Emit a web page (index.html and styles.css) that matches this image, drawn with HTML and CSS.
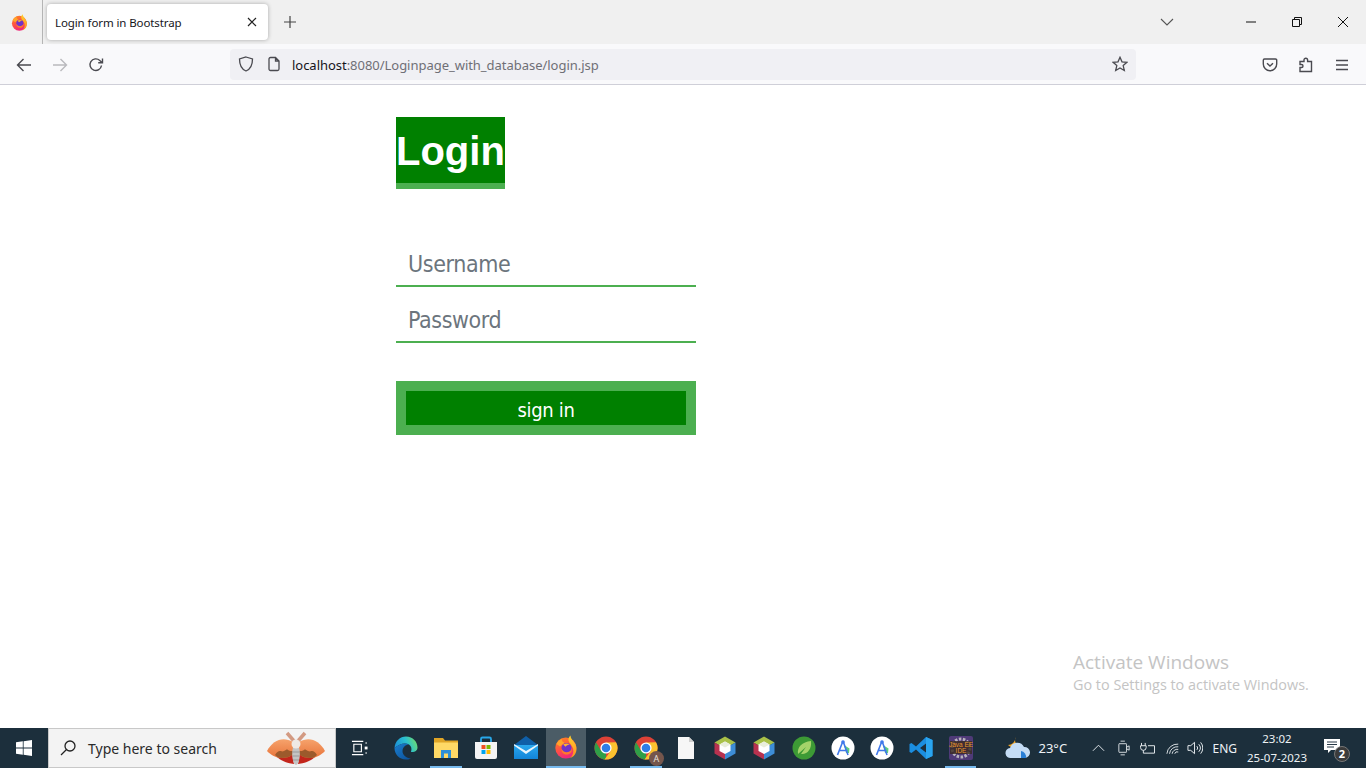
FILE: index.html
```html
<!DOCTYPE html>
<html lang="en">
<head>
  <meta charset="UTF-8" />
  <title>Login form in Bootstrap</title>
  <link rel="stylesheet" href="styles.css">
</head>
<body>
  <svg class="sprite" width="0" height="0">
    <defs>
      <linearGradient id="ffBody" x1="0" y1="0" x2="0.4" y2="1">
        <stop offset="0" stop-color="#ff8a1f"/>
        <stop offset="0.6" stop-color="#ff4f45"/>
        <stop offset="1" stop-color="#f0287a"/>
      </linearGradient>
      <linearGradient id="ffFlame" x1="0" y1="0" x2="0" y2="1">
        <stop offset="0" stop-color="#ffd02e"/>
        <stop offset="1" stop-color="#ff8a1f"/>
      </linearGradient>
      <linearGradient id="edgeTop" x1="0" y1="0.6" x2="1" y2="0.3">
        <stop offset="0" stop-color="#1b8fd8"/>
        <stop offset="0.55" stop-color="#2bc0d0"/>
        <stop offset="1" stop-color="#6fdc6a"/>
      </linearGradient>
      <linearGradient id="edgeLow" x1="0" y1="0" x2="1" y2="1">
        <stop offset="0" stop-color="#1a7fd0"/>
        <stop offset="1" stop-color="#0c4f96"/>
      </linearGradient>
      <linearGradient id="mailBody" x1="0" y1="0" x2="0" y2="1">
        <stop offset="0" stop-color="#2aa8ee"/>
        <stop offset="1" stop-color="#1284d8"/>
      </linearGradient>
      <linearGradient id="mothWing" x1="0" y1="0" x2="0" y2="1">
        <stop offset="0" stop-color="#f6a36c"/>
        <stop offset="1" stop-color="#e8743a"/>
      </linearGradient>
      <symbol id="firefox" viewBox="0 0 24 24">
        <circle cx="11.800" cy="13" r="10.500" fill="url(#ffBody)"/>
        <path d="M16.500 .5c0 2.500 1.500 4 3.500 6.500 2.500 3 3 6.500 2.200 9.500-1 3.500-3.500 6-6.200 6.500 3-2.500 4-6.500 3-9.500-1-3.500-4-5-4.500-8-.3-2 .6-4 2-5z" fill="url(#ffFlame)"/>
        <path d="M2.500 9c1-2.500 3-4.500 5.500-5-.5 1.500.5 3 2.500 3.800L6 11.500z" fill="#ffa42b"/>
        <circle cx="12.500" cy="13" r="5" fill="#7033c8"/>
        <path d="M7.500 13.500c1 3 4.500 4.500 7.500 3.200 1.800-.8 2.700-2.200 2.600-4 1.200 3.300-1 6.800-5.100 6.800-3.200 0-5.500-2.600-5-6z" fill="#ff7a2a"/>
        <path d="M9.200 9.500c2-1.500 4.700-1.500 6.600 0-2 .3-3.500 1-4.300 2.300z" fill="#ffb02e"/>
      </symbol>
      <symbol id="chrome" viewBox="0 0 24 24">
        <circle cx="12" cy="12" r="11.500" fill="#dd4237"/>
        <path d="M2 6.300 7 14.800 12 7 12 23.500A11.500 11.500 0 0 1 2 6.300z" fill="#2f9e48"/>
        <path d="M22 6.300A11.500 11.500 0 0 1 10.500 23.400L16.800 14.700 12 6.500z" fill="#fbc22f"/>
        <circle cx="12" cy="12" r="5.600" fill="#fff"/>
        <circle cx="12" cy="12" r="4.300" fill="#2f7ee8"/>
      </symbol>
      <symbol id="netbeans" viewBox="0 0 24 24">
        <path d="M12 .5 22.500 6.500 12 12.500 1.500 6.500z" fill="#a9c148"/>
        <path d="M1.500 6.500 12 12.500V23.500L1.500 17.500z" fill="#b8324f"/>
        <path d="M22.500 6.500V17.500L12 23.500V12.500z" fill="#3d8dd6"/>
        <path d="M12 5.500 17.500 8.500V15L12 18 6.500 15V8.500z" fill="#fff"/>
        <path d="M12 5.500 17.500 8.500 12 11.500 6.500 8.500z" fill="#e9eedc"/>
      </symbol>
      <symbol id="studio" viewBox="0 0 24 24">
        <circle cx="12" cy="12" r="11.500" fill="#fff"/>
        <path d="M13 9 18.500 12.500 18 17 15 17z" fill="#5ed07e"/>
        <path d="M12 5 6.500 19M12 5 17 19M7.500 14.500H16.500" fill="none" stroke="#3f78ea" stroke-width="1.600"/>
        <circle cx="12" cy="6" r="1.800" fill="#3f78ea"/>
      </symbol>
    </defs>
  </svg>

  <header class="chrome">
    <div class="tabbar">
      <div class="app-menu">
        <svg class="fav" viewBox="0 0 24 24"><use href="#firefox"/></svg>
      </div>
      <div class="tab">
        <span class="tab-title">Login form in Bootstrap</span>
        <svg class="tab-close" viewBox="0 0 12 12"><path d="M2 2 10 10M10 2 2 10"/></svg>
      </div>
      <svg class="new-tab" viewBox="0 0 14 14"><path d="M7 1V13M1 7H13"/></svg>
      <svg class="tab-list" viewBox="0 0 14 8"><path d="M1 1 7 7 13 1"/></svg>
      <div class="win-btns">
        <svg viewBox="0 0 12 12"><path d="M1 6H11"/></svg>
        <svg viewBox="0 0 12 12"><path d="M1.500 3.500H8.500V10.500H1.500zM3.500 3.500V1.500H10.500V8.500H8.500"/></svg>
        <svg viewBox="0 0 12 12"><path d="M1 1 11 11M11 1 1 11"/></svg>
      </div>
    </div>
    <div class="toolbar">
      <div class="nav-btns">
        <svg viewBox="0 0 16 16"><path d="M15 8H1.500M7.500 2 1.500 8 7.500 14"/></svg>
        <svg class="off" viewBox="0 0 16 16"><path d="M1 8H14.500M8.500 2 14.500 8 8.500 14"/></svg>
        <svg viewBox="0 0 16 16"><path d="M13.500 8.500A5.800 5.800 0 1 1 11.800 3.500L14 5.500M14.500 1.500V5.800H10.200"/></svg>
      </div>
      <div class="urlbar">
        <svg class="url-icon" viewBox="0 0 16 16"><path d="M8 1 14.500 3C14.500 9 13 13 8 15 3 13 1.500 9 1.500 3z"/></svg>
        <svg class="url-icon doc" viewBox="0 0 16 16"><path d="M3 3A1.500 1.500 0 0 1 4.500 1.500H9.500L13 5V13A1.500 1.500 0 0 1 11.500 14.500H4.500A1.500 1.500 0 0 1 3 13zM9.500 1.500V5H13"/></svg>
        <span class="url-text">localhost<span class="url-rest">:8080/Loginpage_with_database/login.jsp</span></span>
        <svg class="url-icon star" viewBox="0 0 16 16"><path d="M8 1.300 10 5.800 14.900 6.300 11.200 9.600 12.300 14.500 8 12 3.700 14.500 4.800 9.600 1.100 6.300 6 5.800z"/></svg>
      </div>
      <div class="tool-btns">
        <svg viewBox="0 0 16 16"><path d="M2.500 2H13.500A1.200 1.200 0 0 1 14.700 3.200V7A6.700 6.700 0 0 1 1.300 7V3.200A1.200 1.200 0 0 1 2.500 2zM5 6.200 8 9 11 6.200"/></svg>
        <svg viewBox="0 0 16 16"><path d="M2 14.500V10.500H3.500A1.500 1.500 0 0 0 3.500 7.500H2V4.500H6V3A1.800 1.800 0 0 1 9.600 3V4.500H13.500V14.500z"/></svg>
        <svg viewBox="0 0 16 16"><path d="M2 3.500H14M2 8H14M2 12.500H14"/></svg>
      </div>
    </div>
  </header>

  <main class="page">
    <div class="login">
      <h1 class="login-title">Login</h1>
      <form class="login-form">
        <input class="field" type="text" placeholder="Username" />
        <input class="field" type="password" placeholder="Password" />
        <input class="submit" type="submit" value="sign in" />
      </form>
    </div>
    <div class="activate">
      <div class="activate-head">Activate Windows</div>
      <div class="activate-sub">Go to Settings to activate Windows.</div>
    </div>
  </main>

  <footer class="taskbar">
    <div class="start">
      <svg viewBox="0 0 16 16"><path d="M0 2.300 6.800 1.300V7.600H0zM7.600 1.200 16 0V7.600H7.600zM0 8.400H6.800V14.700L0 13.700zM7.600 8.400H16V16L7.600 14.800z"/></svg>
    </div>
    <div class="search">
      <svg class="search-icon" viewBox="0 0 16 16"><circle cx="10" cy="6" r="5"/><path d="M6.500 9.500 1 15"/></svg>
      <span class="search-text">Type here to search</span>
      <svg class="moth" viewBox="0 0 58 36">
        <path d="M27 11 20 3M31 11 38 3" stroke="#d39a82" stroke-width="3.500" fill="none"/>
        <path d="M25 20C18 21 12 24 10 27c3 3 9 6 17 7z" fill="#c3261c"/>
        <path d="M33 20C40 21 46 24 48 27c-3 3-9 6-17 7z" fill="#c3261c"/>
        <path d="M26 12C16 6 6 10 0 21c4 4 9 7 14 7 5 0 9-1 12-4z" fill="url(#mothWing)"/>
        <path d="M32 12C42 6 52 10 58 21c-4 4-9 7-14 7-5 0-9-1-12-4z" fill="url(#mothWing)"/>
        <path d="M8 25c2-3 3-4 5-4s2 1 4 0 3-2 4-1 3 1 5 1v3c-3 3-7 4-12 4-2 0-4-1-6-3zM50 25c-2-3-3-4-5-4s-2 1-4 0-3-2-4-1-3 1-5 1v3c3 3 7 4 12 4 2 0 4-1 6-3z" fill="#9c5a2c"/>
        <ellipse cx="29" cy="24" rx="3.800" ry="11" fill="#c4c4c4"/>
        <path d="M25.500 22H32.500M25.500 26H32.500M26 30H32" stroke="#9a9a9a" stroke-width="1"/>
        <circle cx="29" cy="14" r="4.500" fill="#efe9e4"/>
      </svg>
    </div>
    <div class="taskview">
      <svg viewBox="0 0 18 16"><path d="M1 1H13M1 15H13M3 4H11V12H3zM16 2V3.500M16 12.500V14"/><rect class="dot" x="14.500" y="6.500" width="3" height="3"/></svg>
    </div>
    <div class="apps">
      <div class="app">
        <svg viewBox="0 0 24 24">
          <path d="M.5 12C1 5 6 .5 12 .5c7 0 11.500 5.500 11.500 11 0 3.500-3.500 5-6.500 4.500 1-3 .5-6-2-7.500-4-2.500-10-.5-14.500 3.500z" fill="url(#edgeTop)"/>
          <path d="M.5 12c4.500-4 10.500-6 14.500-3.500-3 0-6.500 2.500-6.500 6.500s3.500 7 8.500 7.500c-2 1-3.500 1-5 1C5 23.500.5 18 .5 12z" fill="url(#edgeLow)"/>
        </svg>
      </div>
      <div class="app running">
        <svg viewBox="0 0 24 24">
          <path d="M0 2H9L11 4.500H24V22H0z" fill="#e0a526"/>
          <path d="M0 6.500H24V22H0z" fill="#ffd966"/>
          <path d="M7 22V14H17V22H14V17.500H10V22z" fill="#2d8fd8"/>
        </svg>
      </div>
      <div class="app">
        <svg viewBox="0 0 24 24">
          <path d="M7 6V3A1.500 1.500 0 0 1 8.500 1.500H15.500A1.500 1.500 0 0 1 17 3V6" fill="none" stroke="#28a8ea" stroke-width="1.800"/>
          <path d="M1 6H23V21A2 2 0 0 1 21 23H3A2 2 0 0 1 1 21z" fill="#f4f4f4"/>
          <rect x="7.500" y="9" width="4" height="4" fill="#f25022"/>
          <rect x="12.500" y="9" width="4" height="4" fill="#7fba00"/>
          <rect x="7.500" y="14" width="4" height="4" fill="#00a4ef"/>
          <rect x="12.500" y="14" width="4" height="4" fill="#ffb900"/>
        </svg>
      </div>
      <div class="app">
        <svg viewBox="0 0 24 24">
          <path d="M0 9 12 0 24 9z" fill="#0f5fa8"/>
          <path d="M0 9H24V23H0z" fill="url(#mailBody)"/>
          <path d="M0 8 12 15 24 8 24 9.500 12 18 0 9.500z" fill="#e8f4fc"/>
        </svg>
      </div>
      <div class="app active">
        <svg viewBox="0 0 24 24"><use href="#firefox"/></svg>
      </div>
      <div class="app">
        <svg viewBox="0 0 24 24"><use href="#chrome"/></svg>
      </div>
      <div class="app running">
        <svg viewBox="0 0 24 24"><use href="#chrome"/></svg>
        <span class="profile">A</span>
      </div>
      <div class="app tight">
        <svg viewBox="0 0 24 24"><path d="M4 1H15L20 6V23H4z" fill="#f6f6f6"/><path d="M15 1 20 6H15z" fill="#cfcfcf"/></svg>
      </div>
      <div class="app tight">
        <svg viewBox="0 0 24 24"><use href="#netbeans"/></svg>
      </div>
      <div class="app tight">
        <svg viewBox="0 0 24 24"><use href="#netbeans"/></svg>
      </div>
      <div class="app tight">
        <svg viewBox="0 0 24 24">
          <circle cx="12" cy="12" r="11.500" fill="#3d9a35"/>
          <path d="M6 18C5 11 10 6 19 5 20 13 15 19 9 18L14 11z" fill="#a5d36a"/>
        </svg>
      </div>
      <div class="app tight">
        <svg viewBox="0 0 24 24"><use href="#studio"/></svg>
      </div>
      <div class="app tight">
        <svg viewBox="0 0 24 24"><use href="#studio"/></svg>
      </div>
      <div class="app tight">
        <svg viewBox="0 0 24 24">
          <path d="M17 1 23.500 4V20L17 23 7 13.500 2.500 17 .5 16V8L2.500 7 7 10.500zM17 7.500 11 12 17 16.500z" fill="#1b8ee0"/>
          <path d="M17 1 23.500 4V20L17 23z" fill="#2aa5f0"/>
        </svg>
      </div>
      <div class="app tight running">
        <svg viewBox="0 0 24 24">
          <rect width="24" height="24" rx="2" fill="#4f3a78"/>
          <circle cx="12" cy="12" r="9" fill="none" stroke="#b9b4bd" stroke-width="3" stroke-dasharray="2.500 1.500"/>
          <rect x="1" y="5" width="22" height="13" fill="#3a2a20" opacity="0.8"/>
          <text class="jee" x="12" y="10.500">Java EE</text>
          <text class="jee" x="12" y="17">IDE</text>
        </svg>
      </div>
    </div>
    <div class="tray">
      <svg class="weather" viewBox="0 0 26 24">
        <path d="M11 1C9 5 10 9 16 9 14 13 7 13 3 9 7 9 10 6 11 1z" fill="#f5a623"/>
        <path d="M6 22A5 5 0 0 1 5 12 7.500 7.500 0 0 1 19 11 5.500 5.500 0 0 1 20 22z" fill="#c4dcf5"/>
        <path d="M16 22V15A6 6 0 0 1 21 22z" fill="#2a7fd6"/>
      </svg>
      <span class="temp">23°C</span>
      <svg class="tray-icon caret" viewBox="0 0 14 8"><path d="M1 7 7 1 13 7"/></svg>
      <svg class="tray-icon cam" viewBox="0 0 14 18"><path d="M3 1H8M3 17H8M1 4.500V13.500M10 4.500V13.500M1 4H10M1 14H10M10 8 13 6.500V11.500L10 10"/></svg>
      <svg class="tray-icon plug" viewBox="0 0 16 14"><path d="M1 1V4M5 1V4M0 4H6V6A3 3 0 0 1 0 6zM3 9V12H15V4H8"/></svg>
      <svg class="tray-icon wifi" viewBox="0 0 16 14"><path d="M1 13A12 12 0 0 1 14 2M4 13A9 9 0 0 1 14 5M7 13A6 6 0 0 1 14 8M10 13A3 3 0 0 1 14 11"/></svg>
      <svg class="tray-icon speaker" viewBox="0 0 17 14"><path d="M1 4.500H4L8 1V13L4 9.500H1zM10.500 5A3 3 0 0 1 10.500 9M12.500 3A6 6 0 0 1 12.500 11M14.500 1A9 9 0 0 1 14.500 13"/></svg>
      <span class="lang">ENG</span>
      <div class="clock">
        <span>23:02</span>
        <span>25-07-2023</span>
      </div>
      <div class="notify">
        <svg viewBox="0 0 16 14"><path d="M0 0H16V11H7L4 14V11H0z" fill="#fff"/><path d="M3 3H13M3 5.500H13M3 8H10" stroke="#2a3b48" stroke-width="1"/></svg>
        <span class="notify-count">2</span>
      </div>
    </div>
  </footer>
</body>
</html>
```

FILE: styles.css
```css
* {
  box-sizing: border-box;
}

html,
body {
  height: 100%;
}

body {
  margin: 0;
  display: flex;
  flex-direction: column;
  height: 768px;
  overflow: hidden;
  font-family: "Noto Sans", sans-serif;
  background: white;
}

.sprite {
  position: absolute;
}

/* browser chrome */
.chrome {
  flex: none;
}

.tabbar {
  display: flex;
  align-items: center;
  height: 44px;
  background: #f0f0f0;
}

.app-menu {
  display: flex;
  align-items: center;
  justify-content: center;
  width: 43px;
  height: 44px;
  border-right: 1px solid #b5b5b5;
}

.fav {
  width: 17px;
  height: 17px;
  margin-right: 4px;
}

.tab {
  display: flex;
  align-items: center;
  justify-content: space-between;
  width: 221px;
  height: 36px;
  margin-left: 4px;
  padding: 0 10px 0 8px;
  background: white;
  border-radius: 4px;
  box-shadow: 0 0 4px rgba(0, 0, 0, 0.3);
}

.tab-title {
  font-size: 11.5px;
  letter-spacing: -0.1px;
  color: #15141a;
}

.tab-close {
  width: 12px;
  height: 12px;
  fill: none;
  stroke: #222;
  stroke-width: 1.2;
}

.new-tab {
  width: 14px;
  height: 14px;
  margin-left: 15px;
  fill: none;
  stroke: #444;
  stroke-width: 1.2;
}

.tab-list {
  width: 14px;
  height: 8px;
  margin-left: auto;
  fill: none;
  stroke: #555;
  stroke-width: 1.1;
}

.win-btns {
  display: flex;
  gap: 34px;
  margin-left: 71px;
  margin-right: 17px;
}

.win-btns svg {
  width: 12px;
  height: 12px;
  fill: none;
  stroke: #111;
  stroke-width: 1;
}

.toolbar {
  display: flex;
  align-items: center;
  height: 41px;
  background: #f9f9fb;
  border-bottom: 1px solid #cfcfd8;
}

.nav-btns {
  display: flex;
  gap: 20px;
  width: 230px;
  padding: 1px 0 0 16px;
}

.nav-btns svg,
.tool-btns svg {
  width: 16px;
  height: 16px;
  fill: none;
  stroke: #4a4a50;
  stroke-width: 1.4;
}

.nav-btns .off {
  stroke: #b9b9bd;
}

.urlbar {
  display: flex;
  align-items: center;
  width: 906px;
  height: 31px;
  padding: 0 8px;
  background: #f0f0f4;
  border-radius: 4px;
}

.url-icon {
  width: 16px;
  height: 16px;
  fill: none;
  stroke: #4a4a50;
  stroke-width: 1.3;
}

.url-icon.doc {
  margin-left: 12px;
}

.url-text {
  margin-left: 10px;
  padding-top: 1px;
  font-size: 13px;
  letter-spacing: -0.03px;
  color: #15141a;
}

.url-rest {
  color: #6f6f76;
}

.url-icon.star {
  margin-left: auto;
}

.tool-btns {
  display: flex;
  gap: 20px;
  padding: 1px 0 0 126px;
}

/* login page */
.page {
  flex: 1;
  position: relative;
  padding: 32px 0 0 396px;
}

.login {
  width: 300px;
}

.login-title {
  display: inline-block;
  margin: 0;
  height: 72px;
  padding-top: 8px;
  font-family: "Liberation Sans", sans-serif;
  font-size: 40px;
  line-height: 52px;
  font-weight: 700;
  color: white;
  background: green;
  border-bottom: 6px solid #4caf50;
}

.login-form {
  display: flex;
  flex-direction: column;
  margin-top: 42px;
}

.field {
  width: 100%;
  height: 55px;
  margin-top: 1px;
  padding: 10px 12px 0;
  font-family: "DejaVu Sans", sans-serif;
  font-stretch: condensed;
  font-size: 23px;
  letter-spacing: -0.4px;
  border: none;
  border-bottom: 2px solid #4caf50;
  background: white;
  outline: none;
}

.field::placeholder {
  color: #6c757d;
  opacity: 1;
}

.submit {
  width: 100%;
  height: 54px;
  margin-top: 38px;
  font-family: "DejaVu Sans", sans-serif;
  font-stretch: condensed;
  font-size: 20px;
  letter-spacing: -0.3px;
  color: white;
  background: green;
  border: 10px solid #4caf50;
  padding: 4px 0 0;
}

.activate {
  position: absolute;
  left: 1073px;
  top: 564px;
  color: #c4c4c4;
  font-family: "Open Sans", sans-serif;
}

.activate-head {
  font-size: 19px;
  line-height: 26px;
}

.activate-sub {
  font-size: 14.4px;
  line-height: 19px;
}

/* windows taskbar */
.taskbar {
  flex: none;
  display: flex;
  height: 40px;
  background: #1c2f3c;
  color: white;
}

.start {
  display: flex;
  align-items: center;
  justify-content: center;
  width: 48px;
}

.start svg {
  width: 16px;
  height: 16px;
  fill: white;
}

.search {
  display: flex;
  align-items: center;
  width: 288px;
  padding: 0 10px 0 11px;
  background: #f3f3f3;
  border: 1px solid #c8c8c8;
}

.search-icon {
  width: 16px;
  height: 16px;
  fill: none;
  stroke: #222;
  stroke-width: 1.3;
}

.search-text {
  margin-left: 12px;
  font-size: 14px;
  color: #2a2a2a;
}

.moth {
  width: 58px;
  height: 36px;
  margin-left: auto;
}

.taskview {
  display: flex;
  align-items: center;
  justify-content: center;
  width: 50px;
  padding-right: 3px;
}

.taskview svg {
  width: 17px;
  height: 16px;
  fill: none;
  stroke: white;
  stroke-width: 1.2;
}

.taskview .dot {
  fill: white;
  stroke: none;
}

.apps {
  display: flex;
}

.app {
  position: relative;
  display: flex;
  align-items: center;
  justify-content: center;
  width: 40px;
}

.app.tight {
  width: 39.3px;
}

.app svg {
  width: 24px;
  height: 24px;
}

.app.active {
  background: #4b5c66;
  border-bottom: 2px solid #76b9ed;
}

.app.running::after {
  content: "";
  position: absolute;
  left: 4px;
  right: 4px;
  bottom: 0;
  height: 2px;
  background: #76b9ed;
}

.profile {
  position: absolute;
  right: 2px;
  bottom: 2px;
  width: 15px;
  height: 15px;
  border-radius: 50%;
  font-size: 9px;
  line-height: 15px;
  text-align: center;
  color: #e8e0dc;
  background: #75564c;
}

.jee {
  font-family: "Liberation Sans", sans-serif;
  font-size: 6.5px;
  text-anchor: middle;
  fill: #e8962c;
}

.tray {
  display: flex;
  align-items: center;
  margin-left: auto;
  font-size: 12px;
  color: #eef2f5;
}

.weather {
  width: 26px;
  height: 24px;
}

.temp {
  margin-left: 7px;
  width: 54px;
  font-size: 13px;
}

.tray-icon {
  fill: none;
  stroke: #eef2f5;
  stroke-width: 1;
}

.caret {
  width: 13px;
  height: 8px;
}

.cam {
  width: 12px;
  height: 16px;
  margin-left: 13px;
}

.plug {
  width: 16px;
  height: 13px;
  margin-left: 10px;
}

.wifi {
  width: 14px;
  height: 13px;
  margin-left: 10px;
}

.speaker {
  width: 16px;
  height: 14px;
  margin-left: 7px;
}

.lang {
  margin-left: 9px;
}

.clock {
  display: flex;
  flex-direction: column;
  align-items: center;
  width: 62px;
  margin-left: 9px;
  font-size: 11.5px;
  line-height: 19px;
}

.notify {
  position: relative;
  width: 30px;
  height: 24px;
  margin-left: 12px;
  margin-right: 16px;
}

.notify svg {
  position: absolute;
  left: 4px;
  top: 3px;
  width: 16px;
  height: 14px;
}

.notify-count {
  position: absolute;
  right: 0;
  bottom: -2px;
  width: 16px;
  height: 16px;
  border-radius: 50%;
  font-size: 11px;
  font-weight: 700;
  line-height: 14px;
  text-align: center;
  color: white;
  background: #3b3b3b;
  border: 1px solid #777;
}
```
